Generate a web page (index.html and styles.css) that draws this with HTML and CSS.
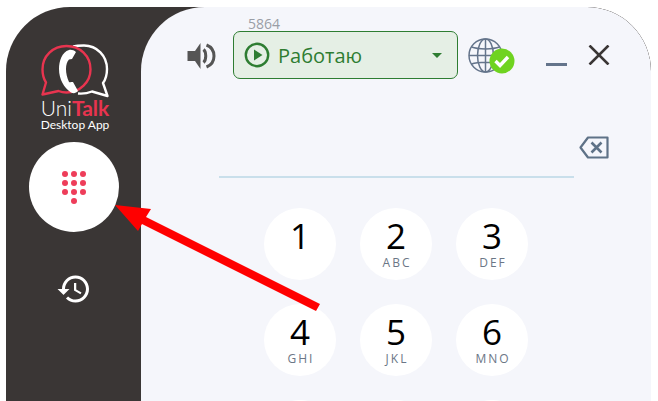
FILE: index.html
```html
<!DOCTYPE html>
<html lang="en">
<head>
    <meta charset="UTF-8">
    <meta name="viewport" content="width=device-width, initial-scale=1.0">
    <title>UniTalk Desktop App</title>
    <link rel="stylesheet" href="styles.css">
</head>
<body>
    <div class="app">
        <aside class="sidebar">
            <div class="logo">
                <svg class="logo-mark" width="70" height="56" viewBox="0 0 70 56">
                    <path d="M33 2.500 C37 1.500 40 1.500 44 1.500 C57 1.500 67 12 67 25 C67 30 66 35 63 39 L67.500 52 L52 47.500 C47 49.500 43 50 38 49.500" fill="none" stroke="#fff" stroke-width="2.400" stroke-linejoin="round"/>
                    <path d="M2.500 50.500 L6 38.500 C3.500 34.500 2.500 30 2.500 25.500 C2.500 12 13 2 26.500 2 C40 2 50.500 12 50.500 25.500 C50.500 38 40 48.500 26.500 48.500 C23 48.500 21 48 18.500 47 Z" fill="none" stroke="#e8344f" stroke-width="2.400" stroke-linejoin="round"/>
                    <path d="M29 6 C22 8 19 17 19 25 C19 35 24 44 31 48.500 C34 50 36 49 38 47 L33 38 C31.500 38 30 38.500 29 38 C27 34 26 29 26 25 C26 21 27 17.500 29 15.500 L32 15 L36 8 C34 6 31 5.500 29 6 Z" fill="#fff"/>
                </svg>
                <div class="logo-name">Uni<b>Talk</b></div>
                <div class="logo-sub">Desktop App</div>
            </div>
            <button class="nav-dial">
                <svg width="24" height="36" viewBox="0 0 24 36">
                    <g fill="#ee3d5a">
                        <circle cx="3" cy="3" r="3"/><circle cx="12" cy="3" r="3"/><circle cx="21" cy="3" r="3"/>
                        <circle cx="3" cy="12" r="3"/><circle cx="12" cy="12" r="3"/><circle cx="21" cy="12" r="3"/>
                        <circle cx="3" cy="21" r="3"/><circle cx="12" cy="21" r="3"/><circle cx="21" cy="21" r="3"/>
                        <circle cx="12" cy="30" r="3"/>
                    </g>
                </svg>
            </button>
            <svg class="nav-history" width="36" height="36" viewBox="0 0 24 24">
                <path fill="#fff" d="M13 3c-4.970 0-9 4.030-9 9H1l3.890 3.890.07.14L9 12H6c0-3.870 3.130-7 7-7s7 3.130 7 7-3.130 7-7 7c-1.930 0-3.680-.79-4.940-2.060l-1.420 1.420C8.270 19.990 10.510 21 13 21c4.970 0 9-4.030 9-9s-4.030-9-9-9zm-1 5v5l4.280 2.540.72-1.210-3.500-2.080V8H12z"/>
            </svg>
        </aside>
        <main class="panel">
            <div class="topbar">
                <svg class="speaker" width="30" height="28" viewBox="0 0 30 28">
                    <path fill="#555" d="M0.500 9 H8 L13.500 1 V27 L8 19 H0.500 Z"/>
                    <path fill="none" stroke="#555" stroke-width="3" d="M16.500 7.500 C19.500 10 19.500 18 16.500 20.500"/>
                    <path fill="none" stroke="#555" stroke-width="3" d="M19.500 3 C29.500 7 29.500 21 19.500 25"/>
                </svg>
                <div class="status-wrap">
                    <span class="ext">5864</span>
                    <div class="status">
                        <svg width="26" height="26" viewBox="0 0 26 26">
                            <circle cx="13" cy="13" r="11.200" fill="none" stroke="#2e7d32" stroke-width="2.400"/>
                            <path d="M10 7.500 L18.500 13 L10 18.500 Z" fill="#2e7d32"/>
                        </svg>
                        <span class="status-text">Работаю</span>
                        <span class="caret"></span>
                    </div>
                </div>
                <svg class="globe" width="47" height="37" viewBox="0 0 47 37">
                    <g fill="none" stroke="#64748b" stroke-width="1.500">
                        <circle cx="17.500" cy="18.500" r="16.500"/>
                        <ellipse cx="17.500" cy="18.500" rx="8" ry="16.500"/>
                        <path d="M17.500 2 V35 M3.500 10 C10 12.500 25 12.500 31.500 10 M1 18.500 H34 M3.500 27 C10 24.500 25 24.500 31.500 27"/>
                    </g>
                    <circle cx="34" cy="24" r="12.500" fill="#6fd320"/>
                    <path d="M27.500 24 L32 28.500 L40 20" fill="none" stroke="#fff" stroke-width="3.400"/>
                </svg>
                <span class="minimize"></span>
                <svg class="close" width="22" height="20" viewBox="0 0 22 20">
                    <path d="M1.500 0.500 L20.500 19.500 M20.500 0.500 L1.500 19.500" stroke="#3a3635" stroke-width="2.600"/>
                </svg>
            </div>
            <div class="number-row">
                <svg width="30" height="23" viewBox="0 0 30 23">
                    <path d="M9 1.500 H28.500 V21.500 H9 L1.500 11.500 Z" fill="none" stroke="#5f7287" stroke-width="2.200" stroke-linejoin="round"/>
                    <path d="M12.500 6.500 L22.500 16.500 M22.500 6.500 L12.500 16.500" stroke="#5f7287" stroke-width="2.600"/>
                </svg>
            </div>
            <div class="number-line"></div>
            <div class="keypad">
                <div class="key"><span class="num">1</span></div>
                <div class="key"><span class="num">2</span><span class="abc">ABC</span></div>
                <div class="key"><span class="num">3</span><span class="abc">DEF</span></div>
                <div class="key"><span class="num">4</span><span class="abc">GHI</span></div>
                <div class="key"><span class="num">5</span><span class="abc">JKL</span></div>
                <div class="key"><span class="num">6</span><span class="abc">MNO</span></div>
                <div class="key"></div>
                <div class="key"></div>
                <div class="key"></div>
            </div>
        </main>
    </div>
    <svg class="arrow" width="658" height="401" viewBox="0 0 658 401">
        <polygon fill="#ff0000" points="115,205 151,209 146,217 320,304 316,311 142,224 138,231"/>
    </svg>
</body>
</html>
```

FILE: styles.css
```css
body {
    margin: 0;
    height: 401px;
    overflow: hidden;
    background-color: #fff;
    font-family: "Open Sans", "Noto Sans", sans-serif;
}

.app {
    display: flex;
    height: 394px;
    margin: 7px 7px 0 6px;
    background-color: #3a3635;
    border-radius: 64px 64px 0 0;
    overflow: hidden;
}

.sidebar {
    width: 135px;
    flex-shrink: 0;
    display: flex;
    flex-direction: column;
    align-items: center;
    padding-top: 37px;
    box-sizing: border-box;
}

.logo {
    display: flex;
    flex-direction: column;
    align-items: center;
    color: #fff;
    margin-left: 3px;
}

.logo-mark {
    display: block;
}

.logo-name {
    font-family: Lato, sans-serif;
    font-size: 21px;
    font-weight: 300;
    line-height: 20px;
    margin-top: -2px;
}

.logo-name b {
    color: #e8344f;
    font-weight: 700;
}

.logo-sub {
    font-family: Lato, sans-serif;
    font-size: 12px;
    line-height: 14px;
}

.nav-dial {
    width: 90px;
    height: 90px;
    margin-top: 10px;
    padding: 6px 0 0;
    border: none;
    border-radius: 50%;
    background-color: #fff;
}

.nav-history {
    margin-top: 39px;
}

.panel {
    flex: 1;
    background-color: #f5f6fb;
    border-radius: 64px 64px 0 0;
    overflow: hidden;
}

.topbar {
    display: flex;
    align-items: flex-start;
    height: 72px;
    padding-left: 46px;
}

.speaker {
    margin-top: 35px;
}

.status-wrap {
    width: 225px;
    margin-left: 16px;
    padding-top: 9px;
}

.ext {
    display: block;
    margin-left: 15px;
    font-size: 14px;
    line-height: 15px;
    color: #9a9ea6;
}

.status {
    display: flex;
    align-items: center;
    height: 48px;
    box-sizing: border-box;
    padding: 0 15px 0 10px;
    border: 1px solid #2e7d32;
    border-radius: 7px;
    background-color: #e5efe5;
    color: #2e7d32;
}

.status-text {
    flex: 1;
    margin-left: 8px;
    font-size: 20px;
    line-height: 28px;
    padding-top: 1px;
}

.caret {
    border-top: 5px solid #2e7d32;
    border-left: 5px solid transparent;
    border-right: 5px solid transparent;
}

.globe {
    flex-shrink: 0;
    margin: 30px 0 0 10px;
}

.minimize {
    width: 21px;
    height: 3px;
    margin: 56px 0 0 31px;
    background-color: #64748b;
}

.close {
    margin: 38px 0 0 21px;
}

.number-row {
    display: flex;
    justify-content: flex-end;
    height: 65px;
    padding: 57px 42px 0 0;
    box-sizing: border-box;
}

.number-line {
    height: 2px;
    margin: 32px 77px 0 78px;
    background-color: #c9dfeb;
}

.keypad {
    display: grid;
    grid-template-columns: repeat(3, 72px);
    gap: 24px;
    margin: 30px 0 0 123px;
}

.key {
    width: 72px;
    height: 72px;
    display: flex;
    flex-direction: column;
    align-items: center;
    border-radius: 50%;
    background-color: #fff;
}

.num {
    font-size: 35px;
    line-height: 32px;
    margin-top: 12px;
    color: #000;
}

.abc {
    font-size: 12px;
    line-height: 14px;
    letter-spacing: 2px;
    margin-top: 4px;
    margin-right: -2px;
    color: #6b7686;
}

.arrow {
    position: absolute;
    top: 0;
    left: 0;
}
```
